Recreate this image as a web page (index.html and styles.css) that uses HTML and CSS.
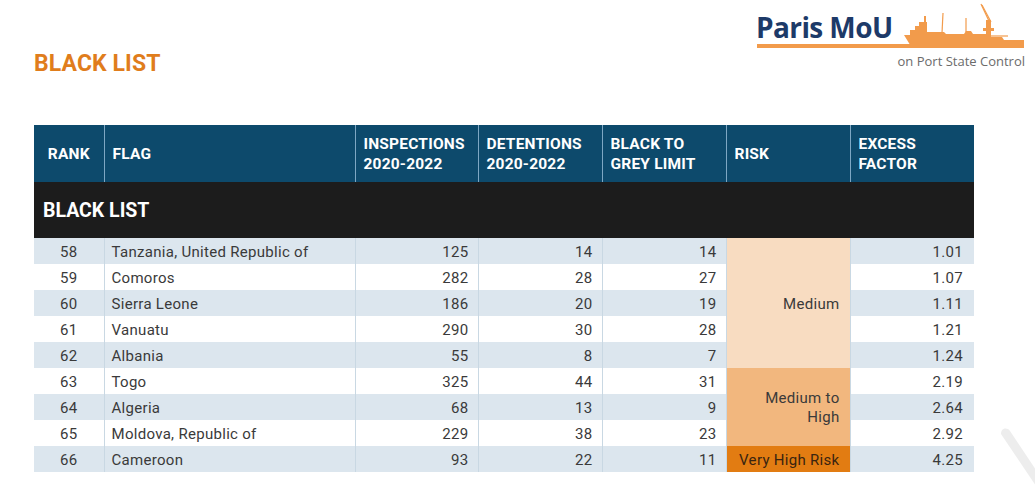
FILE: index.html
```html
<!DOCTYPE html>
<html>
<head>
<meta charset="utf-8">
<link rel="stylesheet" href="styles.css">
</head>
<body>
<div class="page">
  <header class="top">
    <h1 class="title">BLACK LIST</h1>
    <div class="logo">
      <div class="logo-row">
        <span class="logo-name">Paris MoU</span>
        <svg class="ship" width="128" height="48" viewBox="0 0 128 48">
          <g fill="#f29b4b" stroke="none">
            <path d="M6,35 L12,35 L12,30 L17,30 L17,26 L21,26 L21,22 L29,22 L29,32 L46,32 L48,34 L66,34 L68,31 L73,31 L75,34 L88,34 L90,37 L104,37 L106,40 L126,40 L126,48 L14,48 Z"/>
            <rect x="26" y="16" width="2" height="7"/>
            <rect x="88" y="20" width="5" height="26"/>
            <rect x="85" y="28" width="11" height="3"/>
          </g>
          <g stroke="#f29b4b" stroke-width="1.2" fill="none">
            <line x1="45" y1="13" x2="44" y2="33"/>
            <line x1="68" y1="18" x2="68" y2="32"/>
            <line x1="91" y1="21" x2="83" y2="4"/>
            <line x1="84" y1="5" x2="93" y2="22"/>
            <line x1="93" y1="36" x2="110" y2="36"/>
          </g>
        </svg>
      </div>
      <div class="logo-bar"></div>
      <div class="logo-sub">on Port State Control</div>
    </div>
  </header>

  <table class="list">
    <colgroup>
      <col class="c-rank"><col class="c-flag"><col class="c-insp"><col class="c-num"><col class="c-num"><col class="c-num"><col class="c-num">
    </colgroup>
    <thead>
      <tr class="head">
        <th class="center">RANK</th>
        <th>FLAG</th>
        <th>INSPECTIONS<br>2020-2022</th>
        <th>DETENTIONS<br>2020-2022</th>
        <th>BLACK TO<br>GREY LIMIT</th>
        <th>RISK</th>
        <th>EXCESS<br>FACTOR</th>
      </tr>
      <tr class="section">
        <th colspan="7">BLACK LIST</th>
      </tr>
    </thead>
    <tbody>
      <tr class="band">
        <td class="rank">58</td><td class="flag">Tanzania, United Republic of</td><td class="num">125</td><td class="num">14</td><td class="num">14</td>
        <td class="risk risk-med" rowspan="5">Medium</td><td class="num xf">1.01</td>
      </tr>
      <tr>
        <td class="rank">59</td><td class="flag">Comoros</td><td class="num">282</td><td class="num">28</td><td class="num">27</td><td class="num xf">1.07</td>
      </tr>
      <tr class="band">
        <td class="rank">60</td><td class="flag">Sierra Leone</td><td class="num">186</td><td class="num">20</td><td class="num">19</td><td class="num xf">1.11</td>
      </tr>
      <tr>
        <td class="rank">61</td><td class="flag">Vanuatu</td><td class="num">290</td><td class="num">30</td><td class="num">28</td><td class="num xf">1.21</td>
      </tr>
      <tr class="band">
        <td class="rank">62</td><td class="flag">Albania</td><td class="num">55</td><td class="num">8</td><td class="num">7</td><td class="num xf">1.24</td>
      </tr>
      <tr>
        <td class="rank">63</td><td class="flag">Togo</td><td class="num">325</td><td class="num">44</td><td class="num">31</td>
        <td class="risk risk-mh" rowspan="3">Medium to<br>High</td><td class="num xf">2.19</td>
      </tr>
      <tr class="band">
        <td class="rank">64</td><td class="flag">Algeria</td><td class="num">68</td><td class="num">13</td><td class="num">9</td><td class="num xf">2.64</td>
      </tr>
      <tr>
        <td class="rank">65</td><td class="flag">Moldova, Republic of</td><td class="num">229</td><td class="num">38</td><td class="num">23</td><td class="num xf">2.92</td>
      </tr>
      <tr class="band">
        <td class="rank">66</td><td class="flag">Cameroon</td><td class="num">93</td><td class="num">22</td><td class="num">11</td>
        <td class="risk risk-vh">Very High Risk</td><td class="num xf">4.25</td>
      </tr>
    </tbody>
  </table>

  <svg class="watermark" width="40" height="72" viewBox="0 0 40 72">
    <path d="M5,16 C5,10 11,9 14,13 L40,52 L40,68 Z" fill="#ededed"/>
  </svg>
</div>
</body>
</html>
```

FILE: styles.css
```css
* { box-sizing: border-box; }
html, body { margin: 0; padding: 0; background: #ffffff; }
body { font-family: Roboto, "Liberation Sans", sans-serif; color: #333; }

.page {
  position: relative;
  width: 1035px;
  height: 492px;
  overflow: hidden;
}

.top {
  display: flex;
  justify-content: space-between;
  align-items: flex-start;
  padding: 8px 8px 0 34px;
  height: 125px;
}

.title {
  margin: 42px 0 0 0;
  font-size: 23px;
  font-weight: 700;
  color: #e07d1c;
  letter-spacing: 0.1px;
  line-height: 28px;
}

.logo {
  width: 270px;
  display: flex;
  flex-direction: column;
}

.logo-row {
  display: flex;
  align-items: flex-end;
  height: 36px;
}

.logo-name {
  font-family: "Open Sans", "Liberation Sans", sans-serif;
  font-weight: 700;
  font-size: 28px;
  color: #1d3a68;
  line-height: 34px;
  letter-spacing: -0.6px;
  margin-left: -1px;
  white-space: nowrap;
  flex-shrink: 0;
}

.ship {
  flex-shrink: 0;
  margin-left: 6px;
  margin-bottom: -4px;
}

.logo-bar {
  height: 4px;
  background: #f29b4b;
  width: 266px;
}

.logo-sub {
  font-family: "Open Sans", "Liberation Sans", sans-serif;
  font-size: 13px;
  color: #6b6b6b;
  text-align: right;
  margin-top: 4px;
  padding-right: 2px;
  line-height: 18px;
  white-space: nowrap;
}

.list {
  margin-left: 34px;
  width: 940px;
  border-collapse: collapse;
  table-layout: fixed;
  font-size: 15px;
}

.c-rank { width: 70px; }
.c-flag { width: 251px; }
.c-insp { width: 123px; }
.c-num { width: 124px; }

.head th {
  background: #0d4a6c;
  color: #fff;
  font-weight: 700;
  font-size: 15.5px;
  line-height: 20px;
  text-align: left;
  padding: 0 8px;
  height: 57px;
  vertical-align: middle;
  border-left: 1px solid #7ea7c3;
  letter-spacing: 0.2px;
}
.head th:first-child { border-left: none; }
.head th.center { text-align: center; }

.section th {
  background: #1c1c1c;
  color: #fff;
  font-weight: 700;
  font-size: 19.5px;
  text-align: left;
  height: 56px;
  padding: 0 9px;
  vertical-align: middle;
}

tbody td {
  height: 26px;
  padding: 2px 9px 0;
  line-height: 18px;
  color: #3a3a3a;
  border-left: 1px solid #c9d8e3;
  vertical-align: middle;
  white-space: nowrap;
  letter-spacing: 0.3px;
}
tbody td:first-child { border-left: none; }

tbody tr { background: #ffffff; }
tbody tr.band { background: #dce6ee; }

.rank { text-align: center; }
.flag { text-align: left; padding-left: 7px; }
.num { text-align: right; }
.xf { padding-right: 11px; }

.risk {
  text-align: right;
  padding-right: 10px;
  border-left: 1px solid #c9d8e3;
}
.risk-med { background: #f8dcc1; }
.risk-mh { background: #f2b77e; line-height: 19px; }
.risk-vh { background: #e27c12; color: #3a2410; }

.watermark {
  position: absolute;
  left: 996px;
  top: 418px;
}
```
